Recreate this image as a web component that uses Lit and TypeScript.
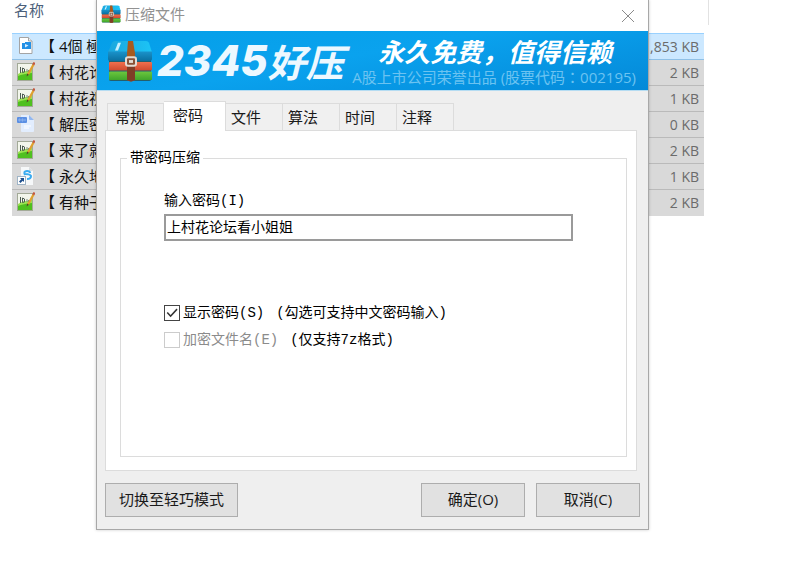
import { LitElement, html, css, svg } from "lit";
import { customElement, property, state } from "lit/decorators.js";
import { classMap } from "lit/directives/class-map.js";

const CJK = css`"Noto Sans CJK SC", sans-serif`;

@customElement("archive-logo")
class ArchiveLogo extends LitElement {
  static styles = css`
    :host { display: block; }
    svg { display: block; width: 100%; height: 100%; }
  `;

  render() {
    return html`<svg viewBox="0 0 46 44" preserveAspectRatio="none" aria-hidden="true">
      <defs>
        <linearGradient id="lid" x2="1"><stop stop-color="#1ba6dd" /><stop offset="1" stop-color="#1cc4f6" /></linearGradient>
        <linearGradient id="front" y2="1" x2="0"><stop stop-color="#1a93cb" /><stop offset="1" stop-color="#0b6f9f" /></linearGradient>
        <linearGradient id="red" y2="1" x2="0"><stop stop-color="#f0704e" /><stop offset="1" stop-color="#cf4a2e" /></linearGradient>
        <linearGradient id="green" y2="1" x2="0"><stop stop-color="#6cc73e" /><stop offset="1" stop-color="#3fa52c" /></linearGradient>
      </defs>
      <path d="M2 20h42v21a2 2 0 0 1-2 2H4a2 2 0 0 1-2-2z" fill="#245f6c" />
      <path d="M8 1h31q2 0 3 2l3 10H1L5 3q1-2 3-2z" fill="url(#lid)" />
      <path d="M1 12h44v8q0 2-2 2H3q-2 0-2-2z" fill="url(#front)" />
      <rect x="2" y="23" width="43" height="9" rx="1" fill="url(#red)" />
      <rect x="2" y="33" width="43" height="9" rx="1" fill="url(#green)" />
      <path d="M11 3h3l-3 8H8z" fill="#c9f0ff" />
      <path d="M21 1h5l2 13v28q-4 3-8 0V14z" fill="#a85a1e" />
      <path d="M20 26h8v16q-4 3-8 0z" fill="#7f3d27" />
      <rect x="19" y="18" width="10" height="9" rx="2" fill="#8a5236" stroke="#e4dcd4" stroke-width="2" />
      <path d="M22 21h4v3h-4z" fill="#e4dcd4" />
    </svg>`;
  }
}

@customElement("file-icon")
class FileIcon extends LitElement {
  static styles = css`
    :host { display: block; width: 18px; height: 20px; }
    svg { display: block; width: 18px; height: 20px; }
  `;

  @property() kind = "text";

  private video() {
    return svg`<path d="M2.500 1.500h9l3.500 3.500v12.500H2.500z" fill="#fff" stroke="#a4a4a4" />
      <path d="M11.500 1.500V5H15" fill="#eee" stroke="#a4a4a4" />
      <path d="M5 7h3V6h6v7H5z" fill="#2491e6" />
      <path d="M8 8l3.500 1.500L8 11.500z" fill="#d8eeff" />`;
  }

  private note() {
    return svg`<rect x=".5" y="1.500" width="15" height="17" fill="#f3f6ec" stroke="#a3aa98" />
      <path d="M1 12q4-3 8-3t6-2v11H1z" fill="#9be253" />
      <path d="M1 14q5-2 14-3v7H1z" fill="#4fc01f" />
      <path d="M3.500 5v6M5.500 6q3 0 2 4l-2 .5z" fill="none" stroke="#4d5c52" />
      <path d="M10 7v3M11.500 8v2" stroke="#7e8c80" />
      <path d="M16.500 2.500l-5.500 10" stroke="#dfa02e" stroke-width="2.200" />
      <path d="M17.500 .5l-1.200 2.300" stroke="#c4573f" stroke-width="2.200" />
      <path d="M10.200 11.500l-.7 3 2.300-1.800z" fill="#51402b" />`;
  }

  private doc() {
    return svg`<path d="M4 1h8l5 5v11q0 1-1 1H5q-1 0-1-1z" fill="#e2edfe" />
      <path d="M12 1v4q0 1 1 1h4z" fill="#94b8ef" />
      <rect y="3" width="10" height="6" rx="1" fill="#5b8fe3" />
      <path d="M2 5v2h1V5zM5 5v2h1V5zM8 5v2" fill="none" stroke="#8fb4ee" />
      <path d="M7 12h7M7 14h5" stroke="#fff" />`;
  }

  private link() {
    return svg`<path d="M4 1h8l4 4v14H4z" fill="#f6f8f9" />
      <path d="M12 1v4h4" fill="#d9dee2" />
      <path d="M8 9q-2-4 2-4 3 0 3 2M8 8q5 0 6 2 0 3-4 3" fill="none" stroke="#3aabf0" stroke-width="2" />
      <rect x=".5" y="10.500" width="8" height="8" fill="#fff" stroke="#9fb4c6" />
      <path d="M3 12h4v4l-1.300-1.300L3.500 17 2 15.500l2.300-2.200z" fill="#1c4e8d" />`;
  }

  render() {
    const art =
      this.kind === "video" ? this.video() :
      this.kind === "doc" ? this.doc() :
      this.kind === "link" ? this.link() : this.note();
    return html`<svg viewBox="0 0 18 20" aria-hidden="true">${art}</svg>`;
  }
}

@customElement("file-list")
class FileList extends LitElement {
  static styles = css`
    :host { display: block; font: 15px/20px "Open Sans", ${CJK}; }
    table { width: 100%; border-collapse: collapse; table-layout: fixed; }
    th { height: 33px; padding: 0 0 12px 2px; box-sizing: border-box; text-align: left; font-weight: 400; color: #4c607a; }
    td { height: 26px; padding: 0; box-sizing: border-box; border-bottom: 1px solid #bababa; background: #d9d9d9; color: #111; white-space: nowrap; }
    .selected td { background: #cce8ff; border-top: 1px solid #99d1ff; border-bottom-color: #8fc0e6; }
    tr:last-child td { border-bottom-color: #d9d9d9; }
    .name { display: flex; align-items: center; gap: 5px; padding-left: 5px; }
    .size { width: 120px; padding: 1px 5px 0 0; text-align: right; color: #6b6b6b; font-size: 14px; }
  `;

  private files = [
    { kind: "video", name: "【 4個 極", size: ",853 KB" },
    { kind: "text", name: "【 村花论", size: "2 KB" },
    { kind: "text", name: "【 村花视", size: "1 KB" },
    { kind: "doc", name: "【 解压密", size: "0 KB" },
    { kind: "text", name: "【 来了就", size: "2 KB" },
    { kind: "link", name: "【 永久地", size: "1 KB" },
    { kind: "text", name: "【 有种子", size: "2 KB" },
  ];

  render() {
    return html`<table>
      <thead><tr><th scope="col">名称</th><th class="size"></th></tr></thead>
      <tbody>
        ${this.files.map((f, i) => html`<tr class=${classMap({ selected: i === 0 })}>
          <td><div class="name"><file-icon kind=${f.kind}></file-icon><span>${f.name}</span></div></td>
          <td class="size">${f.size}</td>
        </tr>`)}
      </tbody>
    </table>`;
  }
}

@customElement("compress-dialog")
class CompressDialog extends LitElement {
  static styles = css`
    :host { display: block; box-sizing: border-box; border: 1px solid #a8a8a8; border-top: 0; background: #efefef; color: #1a1a1a; font: 15px/20px "Open Sans", ${CJK}; }
    .title { display: flex; align-items: center; gap: 4px; height: 31px; box-sizing: border-box; padding: 0 10px 3px 4px; background: #fff; color: #929292; }
    .title archive-logo { width: 20px; height: 18px; }
    .close { display: flex; align-items: center; justify-content: center; width: 20px; height: 20px; margin-left: auto; padding: 0; border: 0; background: none; }
    .close svg { width: 12px; height: 12px; margin-top: 4px; stroke: #8a8a8a; fill: none; }
    .banner { display: flex; align-items: center; height: 60px; box-sizing: border-box; padding: 0 12px 0 10px; border-bottom: 1px solid #b5dcf2; background: linear-gradient(170deg, #049fe8, #0aa2ee 45%, #0489d8); color: #fff; white-space: nowrap; }
    .banner archive-logo { flex: none; width: 46px; height: 42px; }
    .brand { display: flex; align-items: center; margin-left: 4px; color: #edf8ff; font-style: italic; line-height: 56px; }
    .digits { font-family: Inter, sans-serif; font-size: 42px; font-weight: 800; }
    .hanzi { font-family: ${CJK}; font-size: 38px; font-weight: 700; }
    .slogan { margin-left: auto; text-align: right; }
    .lead { padding-right: 24px; font: italic 700 26px/32px ${CJK}; }
    .note { color: #6cc3f1; font-size: 15px; line-height: 20px; }
    .mark { font-family: "Noto Sans CJK TC", sans-serif; }
    .body { padding: 10px 11px 12px 8px; }
    .tabs { display: flex; align-items: flex-end; padding-left: 2px; }
    .tab { height: 27px; padding: 0 21px 0 5px; border: 1px solid #dcdcdc; border-left-width: 0; border-bottom: 0; background: #f0f0f0; color: inherit; font: inherit; }
    .tab:first-child { border-left-width: 1px; padding: 0 18px 0 7px; }
    .tab.active { position: relative; height: 30px; margin-bottom: -1px; padding: 0 22px 4px 9px; background: #fff; }
    .panel { padding: 17px 9px 13px 14px; border: 1px solid #dcdcdc; background: #fff; font: 14px/20px "Liberation Mono", ${CJK}; color: #000; }
    fieldset { min-width: 0; margin: 0; padding: 23px 53px 106px 43px; border: 1px solid #dcdcdc; }
    legend { margin-left: -37px; padding: 0 3px; }
    .field { display: block; margin-bottom: 3px; }
    .password { display: block; width: 100%; height: 27px; box-sizing: border-box; padding: 0 1px 3px; border: 2px solid #9a9a9a; background: #fff; color: #000; font: inherit; }
    .options { display: grid; gap: 7px; margin-top: 62px; }
    .option { display: flex; align-items: center; white-space: nowrap; }
    .option label { display: flex; align-items: center; gap: 3px; }
    .off label { color: #8b8b8b; }
    .hint { margin-left: 12px; }
    .check { appearance: none; display: flex; flex: none; width: 16px; height: 16px; box-sizing: border-box; margin: 0; border: 1px solid #444; background: #fff; }
    .check:checked::after { content: ""; flex: 1; background: #333; clip-path: polygon(12% 50%, 20% 42%, 40% 64%, 82% 18%, 90% 26%, 40% 80%); }
    .check:disabled { border-color: #ccc; }
    .actions { display: flex; gap: 11px; margin: 12px -3px 0 0; }
    .action { height: 34px; width: 104px; padding: 0 0 2px; border: 1px solid #adadad; background: #e1e1e1; color: inherit; font: inherit; }
    .mode { width: 133px; margin-right: auto; }
  `;

  @state() private active = "密码";
  private tabs = ["常规", "密码", "文件", "算法", "时间", "注释"];

  render() {
    return html`
      <div class="title">
        <archive-logo></archive-logo>
        <span>压缩文件</span>
        <button class="close" aria-label="关闭"><svg viewBox="0 0 12 12"><path d="M0 0l12 12M12 0L0 12" /></svg></button>
      </div>
      <div class="banner">
        <archive-logo></archive-logo>
        <div class="brand"><span class="digits">2345</span><span class="hanzi">好压</span></div>
        <div class="slogan">
          <div class="lead">永久免费，值得信赖</div>
          <div class="note">A股上市公司荣誉出品 (股票代码<span class="mark">：</span>002195)</div>
        </div>
      </div>
      <div class="body">
        <div class="tabs" role="tablist">
          ${this.tabs.map((t) => html`<button
            class=${classMap({ tab: true, active: t === this.active })}
            role="tab"
            aria-selected=${t === this.active}
            @click=${() => (this.active = t)}
          >${t}</button>`)}
        </div>
        <div class="panel" role="tabpanel">
          <fieldset>
            <legend>带密码压缩</legend>
            <label class="field" for="password">输入密码(I)</label>
            <input class="password" id="password" type="text" value="上村花论坛看小姐姐" />
            <div class="options">
              <div class="option">
                <label><input class="check" type="checkbox" checked />显示密码(S)</label>
                <span class="hint">(勾选可支持中文密码输入)</span>
              </div>
              <div class="option off">
                <label><input class="check" type="checkbox" disabled />加密文件名(E)</label>
                <span class="hint">(仅支持7z格式)</span>
              </div>
            </div>
          </fieldset>
        </div>
        <div class="actions">
          <button class="action mode">切换至轻巧模式</button>
          <button class="action">确定(O)</button>
          <button class="action">取消(C)</button>
        </div>
      </div>
    `;
  }
}

@customElement("app-root")
class AppRoot extends LitElement {
  static styles = css`
    :host { display: block; position: relative; min-height: 100vh; background: #fff; overflow: hidden; }
    .explorer { display: flex; padding-left: 12px; margin-right: 90px; }
    file-list { flex: 1; margin-right: 4px; }
    .divider { width: 1px; height: 25px; background: #e2e2e2; }
    compress-dialog { position: absolute; top: 0; left: 96px; right: 150px; box-shadow: 0 0 3px #0003; }
  `;

  render() {
    return html`
      <div class="explorer"><file-list></file-list><div class="divider"></div></div>
      <compress-dialog></compress-dialog>
    `;
  }
}
